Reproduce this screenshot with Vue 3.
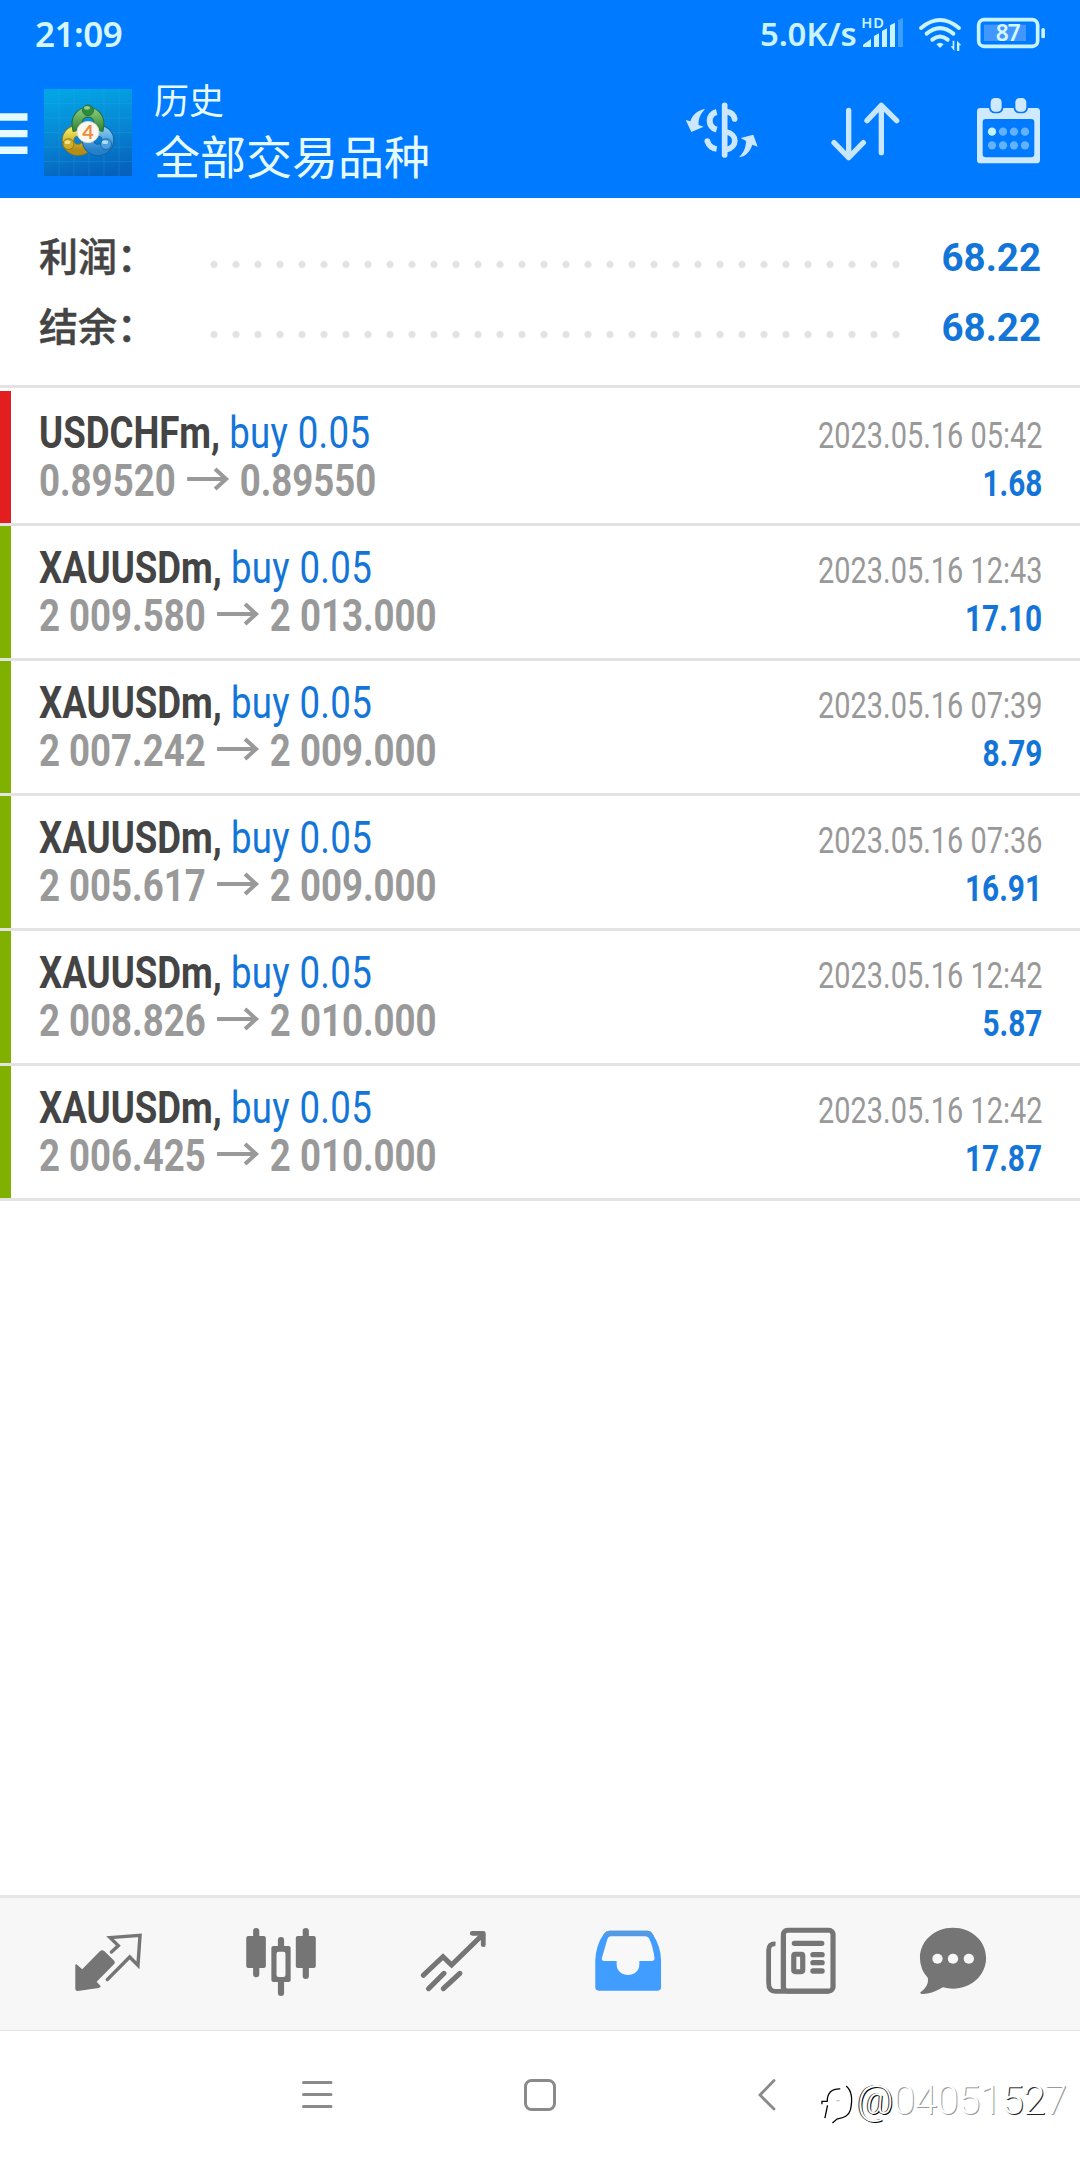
<script setup>
const summary = [
  { label: '利润：', value: '68.22' },
  { label: '结余：', value: '68.22' },
]
const deals = [
  { symbol: 'USDCHFm', open: '0.89520', close: '0.89550', time: '2023.05.16 05:42', profit: '1.68', kind: 'red' },
  { symbol: 'XAUUSDm', open: '2 009.580', close: '2 013.000', time: '2023.05.16 12:43', profit: '17.10', kind: 'green' },
  { symbol: 'XAUUSDm', open: '2 007.242', close: '2 009.000', time: '2023.05.16 07:39', profit: '8.79', kind: 'green' },
  { symbol: 'XAUUSDm', open: '2 005.617', close: '2 009.000', time: '2023.05.16 07:36', profit: '16.91', kind: 'green' },
  { symbol: 'XAUUSDm', open: '2 008.826', close: '2 010.000', time: '2023.05.16 12:42', profit: '5.87', kind: 'green' },
  { symbol: 'XAUUSDm', open: '2 006.425', close: '2 010.000', time: '2023.05.16 12:42', profit: '17.87', kind: 'green' },
]
const dotXs = [1026, 1059, 1092, 1125]
</script>

<template>
  <div class="screen">
    <header class="header">
      <div class="status">
        <span class="clock">21:09</span>
        <span class="speed">5.0K/s</span>
        <svg class="status-icons" viewBox="630 0 560 198">
          <g fill="#c9f3ff">
            <text x="634" y="84" class="hd" textLength="68">HD</text>
            <path d="M639 141V134L663 117V141Z" />
            <path d="M672 141V108L687 100V141Z" />
            <path d="M696 141V93L711 85V141Z" />
            <path d="M720 141V76L735 68V141Z" />
            <path d="M744 141V61L759 53V141Z" opacity=".3" />
            <path d="M870 144L859 133Q870 123 881 133Z" />
            <path d="M913 122V153L902 139H908V122ZM921 153V122L934 136H928V153Z" />
            <rect x="1174" y="84" width="11" height="31" rx="5" />
          </g>
          <g fill="none" stroke="#c9f3ff" stroke-width="12" stroke-linecap="round">
            <path d="M813 84Q870 36 927 84" />
            <path d="M830 101Q870 68 910 101" />
            <path d="M847 119Q870 100 893 119" />
            <rect x="986" y="59" width="177" height="80" rx="16" stroke-width="11" />
          </g>
          <rect x="1002" y="74" width="126" height="49" fill="#4297ff" />
          <text x="1037" y="124" class="level" fill="#d8f7ff" textLength="75">87</text>
        </svg>
      </div>
      <div class="toolbar">
        <svg class="burger" viewBox="0 0 28 132">
          <path d="M0 47.300H27.500V54.700H0ZM0 64H27.500V71.300H0ZM0 80.500H27.500V88H0Z" fill="#e6fbff" />
        </svg>
        <svg class="logo" viewBox="0 0 88 90" preserveAspectRatio="none">
          <defs>
            <linearGradient id="sky" x1=".4" y1="0" x2=".6" y2="1">
              <stop offset="0" stop-color="#03a4e6" />
              <stop offset=".5" stop-color="#0786d3" />
              <stop offset="1" stop-color="#0561bc" />
            </linearGradient>
            <linearGradient id="leaf" x1="0" y1="0" x2="0" y2="1">
              <stop offset="0" stop-color="#7fc070" />
              <stop offset="1" stop-color="#2f8235" />
            </linearGradient>
            <linearGradient id="gold" x1="0" y1="0" x2="0" y2="1">
              <stop offset="0" stop-color="#eee35c" />
              <stop offset="1" stop-color="#b58c16" />
            </linearGradient>
            <linearGradient id="azure" x1="0" y1="0" x2="0" y2="1">
              <stop offset="0" stop-color="#7dc4ee" />
              <stop offset="1" stop-color="#2580cc" />
            </linearGradient>
          </defs>
          <rect width="88" height="90" fill="url(#sky)" />
          <path d="M15 0V90M30 0V90M45 0V90M60 0V90M75 0V90M0 15H88M0 30H88M0 45H88M0 60H88M0 75H88" stroke="#36aee8" stroke-width=".7" opacity=".35" />
          <circle cx="34" cy="53" r="10" fill="none" stroke="#7a7a27" stroke-width="12.500" />
          <circle cx="34" cy="53" r="10" fill="none" stroke="url(#gold)" stroke-width="10.500" />
          <circle cx="54" cy="53" r="10" fill="none" stroke="#14629c" stroke-width="12.500" />
          <circle cx="54" cy="53" r="10" fill="none" stroke="url(#azure)" stroke-width="10.500" />
          <path d="M34 43C30 28 39 24 44 24S58 28 54 43" fill="none" stroke="#1f6e38" stroke-width="11" />
          <path d="M34 43C30 28 39 24 44 24S58 28 54 43" fill="none" stroke="url(#leaf)" stroke-width="9" />
          <circle cx="44" cy="22" r="5.500" fill="#2f8c3b" stroke="#2a703b" />
          <ellipse cx="43" cy="19.500" rx="3" ry="2" fill="#94cd91" />
          <circle cx="24.500" cy="57" r="5.500" fill="#cfac2a" stroke="#8f771b" />
          <ellipse cx="23.500" cy="55" rx="3" ry="2" fill="#f1e386" />
          <circle cx="62" cy="57" r="5.500" fill="#4ba1df" stroke="#1d69a6" />
          <ellipse cx="61" cy="55" rx="3" ry="2" fill="#b2dcf6" />
          <circle cx="44" cy="44.500" r="11" fill="#fbf8f2" stroke="#d7d5c5" />
          <text x="44" y="51.500" text-anchor="middle" class="four">4</text>
        </svg>
        <div class="titles">
          <div class="subtitle">历史</div>
          <div class="title">全部交易品种</div>
        </div>
        <svg class="act-currency" viewBox="100 198 230 396">
          <g fill="none" stroke="#cce7ff" stroke-width="17">
            <path d="M225 316V465" stroke-linecap="round" />
            <path d="M201 336C173 343 173 381 201 389" stroke-width="18" />
            <path d="M173 423C177 437 188 445 201 447" />
            <path d="M230 335C246 337 253 346 255 357" />
            <path d="M230 396C264 402 264 442 230 449" />
          </g>
          <g fill="#cce7ff">
            <circle cx="173" cy="423" r="8.500" />
            <circle cx="255" cy="357" r="8.500" />
            <path d="M166 327C146 330 128 344 122 364L108 360L125 396L162 380L147 375C145 358 152 342 166 327Z" />
            <path d="M268 472C290 469 302 453 308 434L324 440L311 404L273 414L289 423C289 442 282 457 268 472Z" />
          </g>
        </svg>
        <svg class="act-sort" viewBox="540 198 210 396">
          <path d="M596 331V472M552 428L596 473L640 428M694 458V316M651 362L694 316L740 362" fill="none" stroke="#c8e7ff" stroke-width="16" stroke-linecap="round" stroke-linejoin="round" />
        </svg>
        <svg class="act-calendar" viewBox="975 198 200 396">
          <path d="M991 324H1160Q1170 324 1170 334V480Q1170 490 1160 490H991Q981 490 981 480V334Q981 324 991 324ZM1008 357Q998 357 998 367V462Q998 472 1008 472H1143Q1153 472 1153 462V367Q1153 357 1143 357Z" fill="#cfe9ff" fill-rule="evenodd" />
          <rect x="1017" y="289" width="43" height="51" rx="17" fill="#007aff" />
          <rect x="1091" y="289" width="43" height="51" rx="17" fill="#007aff" />
          <rect x="1022" y="294" width="33" height="41" rx="13" fill="#cfe9ff" />
          <rect x="1096" y="294" width="33" height="41" rx="13" fill="#cfe9ff" />
          <circle v-for="x in dotXs" :key="'a' + x" :cx="x" cy="395" r="12.500" :fill="x === 1026 ? '#c3f2ff' : '#63b2ff'" />
          <circle v-for="x in dotXs" :key="'b' + x" :cx="x" cy="436" r="12.500" fill="#63b2ff" />
        </svg>
      </div>
    </header>

    <section class="summary">
      <div v-for="s in summary" :key="s.label" class="sum-row">
        <span class="sum-label">{{ s.label }}</span>
        <span class="dots"></span>
        <span class="sum-value">{{ s.value }}</span>
      </div>
    </section>

    <main class="deals">
      <div v-for="(d, i) in deals" :key="i" class="deal">
        <span class="bar" :class="d.kind"></span>
        <div class="deal-body">
          <div class="line">
            <span class="narrow left"><b class="symbol">{{ d.symbol }},</b> <span class="side">buy 0.05</span></span>
            <span class="narrow right time">{{ d.time }}</span>
          </div>
          <div class="line">
            <span class="narrow left prices">{{ d.open }}<svg class="arrow" viewBox="0 0 42 24" preserveAspectRatio="none"><path d="M0 12H38M28 2L39 12L28 22" fill="none" stroke="#999" stroke-width="4" /></svg>{{ d.close }}</span>
            <span class="narrow right profit">{{ d.profit }}</span>
          </div>
        </div>
      </div>
    </main>

    <footer class="tabs">
      <div class="tab">
        <svg viewBox="168.800 54 290.400 396" preserveAspectRatio="none">
          <path d="M219 256Q220 250 225 255L239 268L291 213Q297 208 303 213L332 242Q336 247 332 252L281 305L293 319Q292 323 287 324L226 333Q219 333 219 326Z" fill="#757575" />
          <path d="M324 216L344 197L320 173L407 166L401 256L377 231L312 299" fill="none" stroke="#757575" stroke-width="10" stroke-linecap="round" />
        </svg>
      </div>
      <div class="tab">
        <svg viewBox="670.800 54 290.400 396" preserveAspectRatio="none">
          <path d="M744 153V283M888 153V288M816 180V205M816 300V339" stroke="#757575" stroke-width="18" stroke-linecap="round" />
          <rect x="715" y="168" width="57" height="96" rx="6" fill="#757575" />
          <rect x="859" y="168" width="58" height="96" rx="6" fill="#757575" />
          <rect x="788" y="198" width="56" height="108" rx="6" fill="#757575" />
          <rect x="803" y="215" width="26" height="76" rx="6" fill="#f7f7f7" />
        </svg>
      </div>
      <div class="tab">
        <svg viewBox="1174.800 54 290.400 396" preserveAspectRatio="none">
          <path d="M1231 286L1288 230L1313 255L1403 164M1246 326L1291 280M1289 326L1337 280" fill="none" stroke="#757575" stroke-width="15" stroke-linecap="round" />
          <path d="M1373 160H1405V194" fill="none" stroke="#757575" stroke-width="14" stroke-linecap="round" stroke-linejoin="round" />
        </svg>
      </div>
      <div class="tab">
        <svg viewBox="108.800 54 290.400 396" preserveAspectRatio="none">
          <path d="M200 152H310Q320 152 325 161Q349 198 350 240V322Q350 332 340 332H169Q159 332 159 322V240Q161 194 184 161Q190 152 200 152Z" fill="#419dff" />
          <path d="M199 152H311Q320 152 325 161L329 168H181L186 160Q191 152 199 152Z" fill="#559ae2" />
          <path d="M203 169H304Q311 169 315 175Q327 200 331 235Q331 243 323 243H287V252C287 275 270 285 254 285S221 275 221 252V243H185Q177 243 178 235L194 178Q197 169 203 169Z" fill="#f8f8f8" />
        </svg>
      </div>
      <div class="tab">
        <svg viewBox="612.800 54 290.400 396" preserveAspectRatio="none">
          <rect x="707" y="151" width="144" height="182" rx="12" fill="none" stroke="#757575" stroke-width="15" />
          <path d="M684 192Q664 190 664 211V308Q664 334 684 334H840" fill="none" stroke="#757575" stroke-width="14" />
          <path d="M707 170V334" stroke="#757575" stroke-width="15" />
          <path d="M739 190H818M793 224H819M793 248H819M793 273H819" stroke="#757575" stroke-width="16" stroke-linecap="round" />
          <rect x="737" y="223" width="26" height="52" rx="4" fill="none" stroke="#757575" stroke-width="15" />
        </svg>
      </div>
      <div class="tab last">
        <svg viewBox="1053.800 54 290.400 396" preserveAspectRatio="none">
          <path d="M1199 143C1252 143 1295 182 1295 234S1252 326 1199 326Q1183 326 1170 322C1148 335 1128 343 1108 342Q1103 341 1104 337C1122 324 1128 310 1126 294Q1103 268 1103 234C1103 182 1146 143 1199 143Z" fill="#757575" />
          <circle cx="1154" cy="236" r="15" fill="#f7f7f7" /><circle cx="1199" cy="236" r="15" fill="#f7f7f7" /><circle cx="1245" cy="236" r="15" fill="#f7f7f7" />
        </svg>
      </div>
    </footer>

    <nav class="sysnav">
      <svg class="recent" viewBox="0 0 32 32"><path d="M2.500 3.500H30M2.500 15.500H30M2.500 27.500H30" stroke="#8a8a8a" stroke-width="3" stroke-linecap="round" /></svg>
      <svg class="home" viewBox="0 0 32 32"><rect x="1.500" y="1.500" width="29" height="29" rx="6" fill="none" stroke="#8a8a8a" stroke-width="3" /></svg>
      <svg class="back" viewBox="0 0 18 32"><path d="M16 1.500L2 16L16 30" fill="none" stroke="#8a8a8a" stroke-width="2.800" stroke-linecap="round" /></svg>
      <div class="mark">
        <svg class="mark-icon" viewBox="60 35 110 135">
          <g fill="none" stroke="#000" stroke-width="4">
            <path d="M66 105V96H82C82 70 96 57 122 58" />
            <path d="M83 108L75 147" />
            <path d="M140 49C158 64 160 90 153 122C147 144 128 146 112 150L98 162" />
            <path d="M110 94H120" stroke-width="2" stroke="#888" />
          </g>
        </svg>
        <span class="mark-text"><span class="strong">@</span>04051<span class="mid">52</span>7</span>
      </div>
    </nav>
  </div>
</template>

<style>
body { margin: 0; background: #fff; }
</style>

<style scoped>
.screen {
  width: 1080px;
  height: 2160px;
  display: flex;
  flex-direction: column;
  background: #fff;
  overflow: hidden;
  font-family: Roboto, "Noto Sans CJK SC", sans-serif;
}
svg { display: block; flex: none; }
.header { height: 198px; background: #007aff; color: #e6fbff; flex: none; }
.status { height: 66px; display: flex; font-family: "Noto Sans", sans-serif; font-weight: 600; line-height: 67px; }
.clock { margin-left: 35px; font-size: 35px; letter-spacing: -.5px; width: 725px; color: #d4f6ff; }
.speed { font-size: 33px; width: 100px; color: #c9f3ff; white-space: nowrap; letter-spacing: -.2px; }
.status-icons { width: 186.670px; height: 66px; }
.hd { font: 600 44px "Noto Sans", sans-serif; }
.level { font: 600 68px "Noto Sans", sans-serif; }
.toolbar { height: 132px; display: flex; }
.burger { width: 28px; height: 132px; }
.logo { width: 88px; height: 87px; margin: 23px 0 0 16px; }
.four { font: bold 20px Lato, sans-serif; fill: #ef8b3a; }
.titles { margin-left: 22px; width: 529.300px; font-family: "Noto Sans CJK SC", sans-serif; }
.subtitle { font-size: 35px; line-height: 48px; margin-top: 9px; }
.title { font-size: 46px; line-height: 60px; margin-top: 1px; }
.act-currency { width: 76.670px; height: 132px; }
.act-sort { width: 70px; height: 132px; margin-left: 70px; }
.act-calendar { width: 66.670px; height: 132px; margin-left: 75px; }

.summary { flex: none; height: 187px; box-sizing: border-box; padding: 20.500px 39px 0 39px; }
.sum-row { display: flex; height: 70px; line-height: 70px; align-items: baseline; }
.sum-label { width: 163.500px; font-family: "Noto Sans CJK SC", sans-serif; font-weight: 500; font-size: 39px; color: #444; -webkit-text-stroke: .5px #444; white-space: nowrap; }
.dots { width: 704px; height: 22px; transform: translateY(4.500px); background: radial-gradient(circle at 11px 11px, #e2e2e2 3.200px, transparent 4px) 0 0 / 22px 22px; }
.sum-value { flex: 1; text-align: right; font-weight: 700; font-size: 38.500px; color: #1475d8; }

.deals { border-top: 3px solid #e3e3e3; flex: 1; }
.deal { height: 132px; display: flex; border-bottom: 3px solid #e3e3e3; }
.bar { width: 11px; }
.red { background: #e31e1e; }
.green { background: #80b100; }
.deal:first-child { padding-top: 3px; }
.deal-body { flex: 1; padding: 18px 38px 0 28px; }
.line { height: 48px; display: flex; justify-content: space-between; align-items: baseline; line-height: 48px; font-size: 44px; }
.narrow { white-space: nowrap; }
.left { transform: scaleX(.832); transform-origin: left; }
.right { transform: scaleX(.828); transform-origin: right; font-size: 36px; }
.right.time { transform: scaleX(.803); }
.symbol { color: #444; }
.side { color: #1475d8; letter-spacing: .4px; }
.prices { color: #999; font-weight: 700; }
.arrow { display: inline-block; width: 50.500px; height: 24px; margin: 0 12.500px 0 14px; vertical-align: 5px; }
.time { color: #999; }
.profit { color: #1475d8; font-weight: 700; }

.tabs { flex: none; height: 136px; box-sizing: border-box; border-top: 3px solid #e6e6e6; background: #f7f7f7; border-bottom: 1px solid #e4e4e4; display: flex; padding-left: 21.500px; }
.tab { width: 173.200px; display: flex; justify-content: center; flex: none; }
.tab.last { width: 131px; }
.tab svg { width: 100px; height: 132px; }

.sysnav { flex: none; height: 129px; display: flex; position: relative; padding-top: 48px; box-sizing: border-box; }
.recent { width: 32px; height: 32px; margin-left: 301px; }
.home { width: 32px; height: 32px; margin-left: 191px; }
.back { width: 18px; height: 32px; margin-left: 202px; }
.mark { position: absolute; left: 820px; top: 43px; display: flex; }
.mark-icon { width: 36px; height: 45px; margin-top: 7px; }
.mark-text { font-size: 40px; letter-spacing: -.5px; line-height: 50px; font-weight: 300; color: #fff; text-shadow: 1px 1px 0 #999; white-space: nowrap; margin-top: 2px; margin-left: 1px; }
.strong { text-shadow: 1px 1px 0 #000, -1px 0 0 #333; }
.mid { text-shadow: 1px 1px 0 #222; }
</style>
